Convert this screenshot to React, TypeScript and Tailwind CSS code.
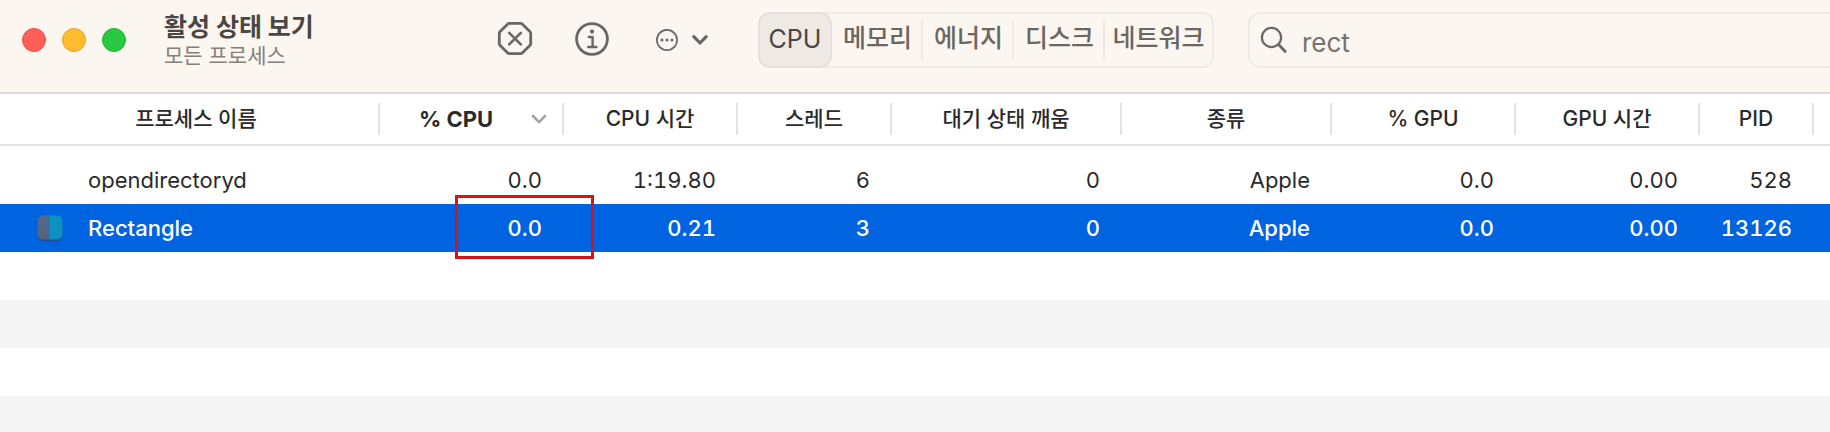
import { useState } from "react";

type Process = {
  name: string;
  icon: boolean;
  cpu: string;
  cpuTime: string;
  threads: string;
  wakeUps: string;
  kind: string;
  gpu: string;
  gpuTime: string;
  pid: string;
};

const processes: Process[] = [
  { name: "opendirectoryd", icon: false, cpu: "0.0", cpuTime: "1:19.80", threads: "6", wakeUps: "0", kind: "Apple", gpu: "0.0", gpuTime: "0.00", pid: "528" },
  { name: "Rectangle", icon: true, cpu: "0.0", cpuTime: "0.21", threads: "3", wakeUps: "0", kind: "Apple", gpu: "0.0", gpuTime: "0.00", pid: "13126" },
];

const columns = [
  { label: "CPU 시간", width: "w-[174px]" },
  { label: "스레드", width: "w-[154px]" },
  { label: "대기 상태 깨움", width: "w-[230px]" },
  { label: "종류", width: "w-[210px]" },
  { label: "% GPU", width: "w-[184px]" },
  { label: "GPU 시간", width: "w-[184px]" },
  { label: "PID", width: "w-[114px]" },
];

const tabs = ["CPU", "메모리", "에너지", "디스크", "네트워크"];

function TrafficLights() {
  return (
    <div className="flex gap-4">
      <button aria-label="닫기" className="size-6 rounded-full border border-[#ec4f49] bg-[#ff5f57]" />
      <button aria-label="최소화" className="size-6 rounded-full border border-[#e5a52c] bg-[#febc2e]" />
      <button aria-label="확대" className="size-6 rounded-full border border-[#20b236] bg-[#28c840]" />
    </div>
  );
}

function StopIcon() {
  return (
    <svg width="36" height="36" viewBox="0 0 36 36" fill="none" stroke="currentColor" strokeLinecap="round" strokeLinejoin="round">
      <path d="M12.3 2.3h11.4q.9 0 1.5.6l7.9 7.9q.6.6.6 1.5v10.4q0 .9-.6 1.5l-7.9 7.9q-.6.6-1.5.6H12.3q-.9 0-1.5-.6l-7.9-7.9q-.6-.6-.6-1.5V12.3q0-.9.6-1.5l7.9-7.9q.6-.6 1.5-.6z" strokeWidth="2.8" />
      <path d="M12.2 11.8l11.6 11.6M23.8 11.8L12.2 23.4" strokeWidth="2.6" />
    </svg>
  );
}

function InfoIcon() {
  return (
    <svg width="36" height="36" viewBox="0 0 36 36" fill="none" stroke="currentColor" strokeLinecap="round" strokeLinejoin="round">
      <circle cx="18" cy="18" r="15.4" strokeWidth="2.8" />
      <circle cx="18" cy="10.6" r="2.1" fill="currentColor" stroke="none" />
      <path d="M14.8 16h3.8v9.8M14.2 26h8.2" strokeWidth="2.4" />
    </svg>
  );
}

function MoreIcon() {
  return (
    <svg width="24" height="24" viewBox="0 0 24 24" fill="none" stroke="currentColor">
      <circle cx="12" cy="12" r="10.1" strokeWidth="1.7" />
      <g fill="currentColor" stroke="none">
        <circle cx="7" cy="12" r="1.5" />
        <circle cx="12" cy="12" r="1.5" />
        <circle cx="17" cy="12" r="1.5" />
      </g>
    </svg>
  );
}

function Chevron({ thick }: { thick?: boolean }) {
  return (
    <svg width="18" height="12" viewBox="0 0 18 12" fill="none" stroke="currentColor" strokeLinecap="round" strokeLinejoin="round">
      <path d={thick ? "M2.8 2.6L9 9l6.2-6.4" : "M3 3l6 6.2L15 3"} strokeWidth={thick ? 3.2 : 2.6} />
    </svg>
  );
}

function SearchIcon() {
  return (
    <svg width="28" height="28" viewBox="0 0 28 28" fill="none" stroke="currentColor" strokeLinecap="round">
      <circle cx="11.5" cy="11.5" r="9.6" strokeWidth="2.2" />
      <path d="M18.6 18.6l6.6 6.800" strokeWidth="2.8" />
    </svg>
  );
}

function AppIcon() {
  return (
    <svg width="28" height="28" viewBox="0 0 28 28" aria-hidden="true">
      <defs>
        <linearGradient id="leftHalf" x1="0" y1="0" x2="0" y2="1">
          <stop offset="0" stopColor="#52688c" />
          <stop offset="1" stopColor="#56627c" />
        </linearGradient>
        <linearGradient id="rightHalf" x1="0" y1="0" x2="0" y2="1">
          <stop offset="0" stopColor="#0a94bd" />
          <stop offset="1" stopColor="#0f8fc8" />
        </linearGradient>
      </defs>
      <rect x="1.5" y="2.5" width="25" height="25" rx="6" fill="#1c4f96" />
      <path d="M7 1.5h6v24H7a5.5 5.5 0 0 1-5.5-5.5V7A5.5 5.5 0 0 1 7 1.5z" fill="url(#leftHalf)" />
      <path d="M13 1.5h8A5.5 5.5 0 0 1 26.5 7v13a5.5 5.5 0 0 1-5.5 5.5h-8z" fill="url(#rightHalf)" />
      <path d="M13 1.5v24" stroke="#2c6f9e" strokeWidth="1" />
    </svg>
  );
}

function Toolbar() {
  const [active, setActive] = useState("CPU");
  return (
    <header className="flex h-[94px] shrink-0 items-start border-b-2 border-[#dfdbd8] bg-[#fcf6f0] pl-[22px] pt-3 text-[#6b6662]">
      <div className="flex h-14 items-center">
        <TrafficLights />
      </div>
      <div className="ml-[38px] w-[333px] shrink-0">
        <h1 className="-mt-px text-[25px] font-bold leading-8 text-[#4b4642]">활성 상태 보기</h1>
        <p className="text-[21px] leading-[26px] text-[#85807b]">모든 프로세스</p>
      </div>
      <div className="flex h-[54px] shrink-0 items-center">
        <button aria-label="프로세스 중단"><StopIcon /></button>
        <button aria-label="정보" className="ml-[41px]"><InfoIcon /></button>
        <button aria-label="추가 옵션" className="ml-[45px] flex items-center gap-3 pt-0.5">
          <MoreIcon />
          <Chevron thick />
        </button>
      </div>
      <div role="tablist" className="ml-[49px] flex h-14 shrink-0 rounded-xl border-2 border-[#efe9e4] text-[25px]">
        {tabs.map((tab, i) => (
          <button
            key={tab}
            role="tab"
            aria-selected={tab === active}
            onClick={() => setActive(tab)}
            className={
              tab === active
                ? "-my-0.5 -ml-0.5 flex w-[74px] items-center justify-center rounded-xl border-2 border-[#e5e0db] bg-[#eee9e3] text-[#4b4642]"
                : i === tabs.length - 1
                  ? "flex w-[107px] items-center justify-center pb-0.5 font-medium"
                  : "flex w-[91px] items-center justify-center bg-[linear-gradient(#eee8e3,#eee8e3)] bg-[length:2px_40px] bg-right bg-no-repeat pb-0.5 font-medium"
            }
          >
            {tab}
          </button>
        ))}
      </div>
      <label className="ml-[34px] flex h-14 min-w-0 flex-1 items-center gap-3.5 rounded-l-xl border-2 border-r-0 border-[#efe9e4] pl-2.5">
        <SearchIcon />
        <input
          type="text"
          aria-label="검색"
          defaultValue="rect"
          className="min-w-0 flex-1 bg-transparent pt-1 text-[26px] text-[#77726d] outline-none"
        />
      </label>
    </header>
  );
}

const dividerCell =
  "h-[51px] bg-[linear-gradient(#e3e3e3,#e3e3e3)] bg-[length:2px_32px] bg-right bg-no-repeat p-0";

function ProcessTable() {
  return (
    <table className="w-full table-fixed border-collapse text-[21px] leading-6 text-[#2a2a2a]">
      <colgroup>
        <col className="w-[380px]" />
        <col className="w-[184px]" />
        {columns.map((c) => (
          <col key={c.label} className={c.width} />
        ))}
        <col />
      </colgroup>
      <thead>
        <tr className="border-b-2 border-[#e3e3e3]">
          <th scope="col" className={dividerCell}>
            <button className="w-full pl-3 font-medium">프로세스 이름</button>
          </th>
          <th scope="col" aria-sort="descending" className={dividerCell}>
            <button className="flex w-full items-center justify-between pl-[39px] pr-4 text-[22px] font-bold">
              % CPU
              <span className="text-[#a3a3a3]"><Chevron /></span>
            </button>
          </th>
          {columns.map((c) => (
            <th key={c.label} scope="col" className={dividerCell}>
              <button className="w-full pr-0.5 font-medium">{c.label}</button>
            </th>
          ))}
          <td />
        </tr>
      </thead>
      <tbody className="text-right text-[22px] tabular-nums before:block before:h-2.5">
        {processes.map((p) => (
          <tr key={p.name} className={p.icon ? "h-12 bg-[#0064e1] font-medium text-white" : "h-12"}>
            <td className="p-0 text-left">
              <div className="flex items-center pl-9">
                <span className="mr-6 flex size-7">{p.icon && <AppIcon />}</span>
                {p.name}
              </div>
            </td>
            <td className="relative py-0 pl-0 pr-[22px]">
              {p.cpu}
              {p.icon && <span className="absolute -bottom-[7px] -right-[30px] -top-[9px] left-[75px] border-[3px] border-[#d3141b]" />}
            </td>
            {[p.cpuTime, p.threads, p.wakeUps, p.kind, p.gpu, p.gpuTime, p.pid].map((value, i) => (
              <td key={i} className="py-0 pl-0 pr-[22px]">{value}</td>
            ))}
            <td />
          </tr>
        ))}
      </tbody>
    </table>
  );
}

export default function App() {
  return (
    <main className="flex h-screen flex-col overflow-hidden bg-white font-['Inter','Noto_Sans_CJK_KR',sans-serif]">
      <Toolbar />
      <ProcessTable />
      <div className="flex-1 bg-[repeating-linear-gradient(#ffffff_0px,#ffffff_48px,#f4f4f4_48px,#f4f4f4_96px)]" />
    </main>
  );
}
